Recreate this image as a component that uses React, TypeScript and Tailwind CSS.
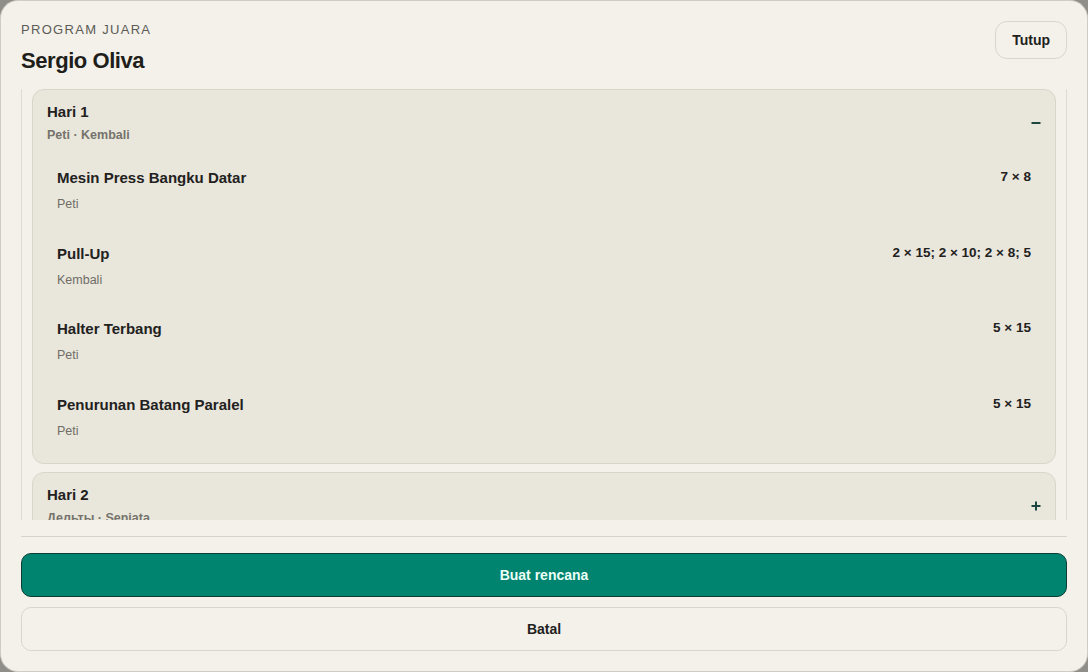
import React from 'react'

const FONT = "font-['Liberation_Sans',Arial,sans-serif]"

interface Exercise {
  name: string
  muscle: string
  sets: string
}

interface Day {
  title: string
  muscles: string
  open: boolean
  items: Exercise[]
}

const days: Day[] = [
  {
    title: 'Hari 1',
    muscles: 'Peti · Kembali',
    open: true,
    items: [
      { name: 'Mesin Press Bangku Datar', muscle: 'Peti', sets: '7 × 8' },
      { name: 'Pull-Up', muscle: 'Kembali', sets: '2 × 15; 2 × 10; 2 × 8; 5' },
      { name: 'Halter Terbang', muscle: 'Peti', sets: '5 × 15' },
      { name: 'Penurunan Batang Paralel', muscle: 'Peti', sets: '5 × 15' },
    ],
  },
  {
    title: 'Hari 2',
    muscles: 'Дельты · Senjata',
    open: false,
    items: [],
  },
]

function ToggleIcon({ open }: { open: boolean }) {
  return (
    <svg width="10" height="10" viewBox="0 0 10 10" className="shrink-0">
      <path d="M0.5 5H9.5" stroke="#1d4640" strokeWidth="2" />
      {!open && <path d="M5 0.5V9.5" stroke="#1d4640" strokeWidth="2" />}
    </svg>
  )
}

function DayCard({ day }: { day: Day }) {
  return (
    <div className="rounded-[12px] border border-[#d9d5ca] bg-[#e9e6dc]">
      <div className="flex items-center justify-between px-[14px] pt-[11px] pb-[11px]">
        <div>
          <div className="text-[15px] leading-[22px] font-bold text-[#22211d]">{day.title}</div>
          <div className="mt-[3px] text-[12.5px] leading-[18px] font-bold text-[#75736b]">{day.muscles}</div>
        </div>
        <ToggleIcon open={day.open} />
      </div>
      {day.open && (
        <div className="flex flex-col gap-[5.5px] px-[14px] pb-[11.5px]">
          {day.items.map((ex) => (
            <div key={ex.name} className="flex justify-between px-[10px] py-[12px]">
              <div>
                <div className="text-[15px] leading-[22px] font-bold text-[#22211d]">{ex.name}</div>
                <div className="mt-[6px] text-[12.5px] leading-[18px] text-[#6f6d66]">{ex.muscle}</div>
              </div>
              <div className="text-[13.5px] leading-[19px] font-bold text-[#22211d]">{ex.sets}</div>
            </div>
          ))}
        </div>
      )}
    </div>
  )
}

export default function App() {
  return (
    <div className={`${FONT} h-[672px] w-[1088px] bg-[#8f8e89]`}>
      <div className="flex h-full flex-col rounded-[18px] border border-[#cfccc2] bg-[#f3f1ea]">
        <div className="flex items-start justify-between px-[20px] pt-[20px]">
          <div>
            <div className="text-[13px] leading-[18px] tracking-[0.1em] text-[#5c5b55]">PROGRAM JUARA</div>
            <div className="mt-[9px] text-[22px] leading-[26px] font-bold tracking-[-0.02em] text-[#1f1e1a]">
              Sergio Oliva
            </div>
          </div>
          <button className="h-[38px] rounded-[12px] border border-[#d9d6cc] bg-[#f3f1ea] px-[16px] text-[14px] font-bold text-[#22211d]">
            Tutup
          </button>
        </div>

        <div className="mx-[20px] mt-[15px] h-[431px] overflow-hidden border-x border-[#dedbd1] px-[10px]">
          <div className="flex flex-col gap-[8px]">
            {days.map((d) => (
              <DayCard key={d.title} day={d} />
            ))}
          </div>
        </div>

        <div className="mx-[20px] mt-[16px] flex flex-col gap-[10px] border-t border-[#d6d3c9] pt-[16px]">
          <button className="h-[44px] rounded-[10px] border border-[#0d3d36] bg-[#00846f] text-[14px] font-bold text-[#ecfff8]">
            Buat rencana
          </button>
          <button className="h-[44px] rounded-[10px] border border-[#d9d6cc] bg-[#f3f1ea] text-[14px] font-bold text-[#22211d]">
            Batal
          </button>
        </div>
      </div>
    </div>
  )
}
